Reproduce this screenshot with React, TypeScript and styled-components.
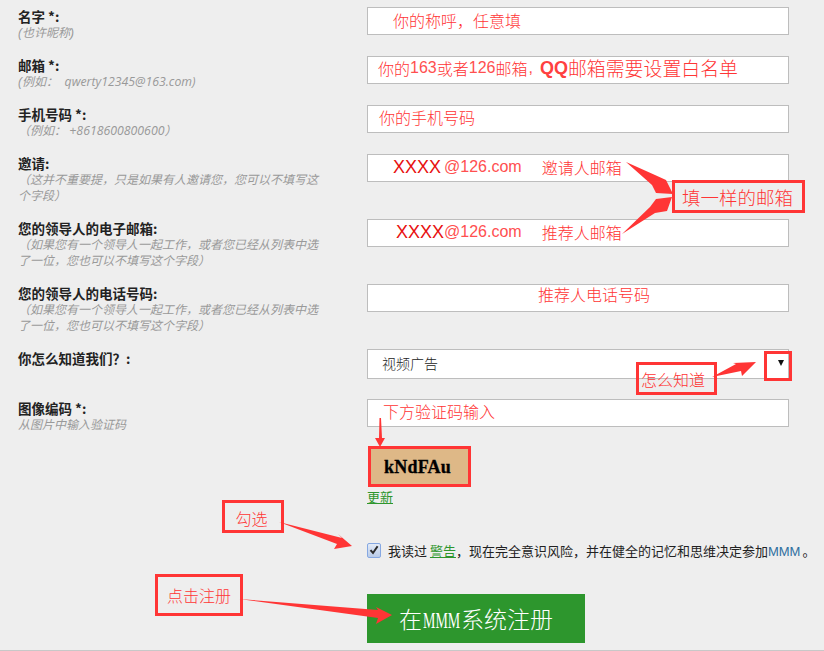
import React from "react";
import styled, { createGlobalStyle } from "styled-components";

const CJK = `"Noto Sans CJK SC", "Liberation Sans", sans-serif`;
const RED = "#ff3535";

const Global = createGlobalStyle`
  html, body { margin: 0; padding: 0; background: #eeeeee; }
  body { font-family: ${CJK}; overflow: hidden; }
`;

const Page = styled.div`
  position: relative;
  width: 824px;
  height: 651px;
  box-sizing: border-box;
  padding-top: 7px;
  background: #eeeeee;
  border-bottom: 1px solid #c8c8c8;
  overflow: hidden;
`;

const Row = styled.div<{ $h: number }>`
  display: flex;
  height: ${(p) => p.$h}px;
`;

const LabelCol = styled.div`
  box-sizing: border-box;
  width: 367px;
  padding-left: 18px;
`;

const Label = styled.div`
  font-size: 13.5px;
  line-height: 18px;
  font-weight: 700;
  color: #222222;
`;

const Hint = styled.div`
  width: 304px;
  font-family: "Liberation Sans", ${CJK};
  font-size: 12px;
  line-height: 16px;
  font-style: italic;
  color: #999999;
`;

const HintLatin = styled.span`
  font-family: "Open Sans", sans-serif;
  font-size: 12.3px;
`;

const FieldCol = styled.div`
  width: 422px;
`;

const Input = styled.div<{ $pad: number; $h?: number; $dark?: boolean; $lift?: number }>`
  box-sizing: border-box;
  display: flex;
  align-items: center;
  height: ${(p) => p.$h ?? 28}px;
  padding-left: ${(p) => p.$pad}px;
  padding-bottom: ${(p) => p.$lift ?? 4}px;
  background: #ffffff;
  border: 1px solid #bdbdbd;
  font-size: ${(p) => (p.$dark ? 14 : 16)}px;
  font-weight: 300;
  line-height: 1;
  white-space: nowrap;
  color: ${(p) => (p.$dark ? "#222222" : RED)};
`;

const Latin = styled.span`
  font-family: "Liberation Sans", sans-serif;
  color: #ff4f4f;
`;

const BoldLatin = styled.span`
  font-family: "Liberation Sans", sans-serif;
  font-size: 18px;
  font-weight: 700;
  margin-left: 7px;
  color: #ff4040;
`;

const LargeTail = styled.span`
  font-size: 18.9px;
`;

const Comma = styled(Latin)`
  margin-left: 1px;
`;

const Xs = styled(Latin)`
  font-size: 18px;
  color: #e81010;
`;

const DotGap = styled(Latin)`
  margin-left: 3px;
`;

const InviteRole = styled.span`
  margin-left: 20px;
`;

const SelectArrow = styled.span`
  position: absolute;
  left: 778px;
  top: 360px;
  width: 0;
  height: 0;
  border-left: 3.5px solid transparent;
  border-right: 3.5px solid transparent;
  border-top: 6px solid #111111;
`;

const CaptchaBlock = styled.div`
  margin-top: 20px;
  margin-left: 1px;
`;

const Captcha = styled.div`
  width: 102px;
  height: 40px;
  display: flex;
  align-items: center;
  justify-content: center;
  padding-right: 3px;
  box-sizing: border-box;
  background: #deb887;
  font-family: "Liberation Serif", serif;
  font-size: 18px;
  font-weight: 700;
  letter-spacing: 0.2px;
  -webkit-text-stroke: 0.3px #000000;
  color: #000000;
`;

const RefreshLink = styled.a`
  display: block;
  width: 26px;
  margin: 1px 0 0 -1px;
  font-size: 13px;
  line-height: 17px;
  color: #2d962d;
  text-decoration: underline;
`;

const AgreeRow = styled.div`
  display: flex;
  align-items: center;
  gap: 7px;
  margin: 35px 0 0 367px;
  height: 16px;
  font-size: 13px;
  white-space: nowrap;
  color: #222222;
`;

const CheckBox = styled.span`
  box-sizing: border-box;
  display: flex;
  align-items: center;
  justify-content: center;
  width: 14px;
  height: 15px;
  border: 1.5px solid #86a8e2;
  border-radius: 2px;
  background: linear-gradient(#e3ebf7, #b9cbe8);
`;

const GreenLink = styled.a`
  color: #2d962d;
  text-decoration: underline;
`;

const Mmm = styled.span`
  font-family: "Liberation Sans", sans-serif;
  color: #2f6f9f;
  margin-right: 2px;
`;

const Submit = styled.button`
  display: block;
  width: 218px;
  height: 49px;
  margin: 36px 0 0 367px;
  padding: 0 0 2px 32px;
  border: 0;
  background: #2d962d;
  color: #ffffff;
  font-family: ${CJK};
  font-size: 23px;
  font-weight: 300;
  text-align: left;
  white-space: nowrap;
`;

const SubmitLatin = styled.span`
  display: inline-block;
  width: 37px;
  margin: 0 1px;
  font-family: "Liberation Serif", serif;
  font-size: 24px;
  transform: scaleX(0.58);
  transform-origin: left center;
`;

const Callout = styled.div<{ $x: number; $y: number; $w: number; $h: number; $size?: number; $right?: number; $top?: number }>`
  position: absolute;
  box-sizing: border-box;
  left: ${(p) => p.$x}px;
  top: ${(p) => p.$y}px;
  width: ${(p) => p.$w}px;
  height: ${(p) => p.$h}px;
  padding-right: ${(p) => p.$right ?? 0}px;
  padding-top: ${(p) => p.$top ?? 0}px;
  border: 3px solid #ff3535;
  display: flex;
  align-items: center;
  justify-content: center;
  color: ${RED};
  font-size: ${(p) => p.$size ?? 16}px;
  font-weight: 300;
  white-space: nowrap;
`;

const Arrows = styled.svg`
  position: absolute;
  left: 0;
  top: 0;
  pointer-events: none;
`;

const arrowPolys = [
  "626,162 655,175 666,180 673,194 656,193 652,185",
  "622,234 650,207 656,199 672,197 667,211 655,213",
  "712,377 736,364 733,363 756,362 742,376 741,371",
  "379.5,418 381,418 382,438 385,438 380,447 375,438 379,438",
  "279,522 342,538 338,534 352,546 334,549 337,544",
  "239,599 378,610 376,607 392,615 376,624 378,618",
];

export default function App() {
  return (
    <Page>
      <Global />
      <Row $h={49}>
        <LabelCol>
          <Label>名字 *:</Label>
          <Hint>(也许昵称)</Hint>
        </LabelCol>
        <FieldCol>
          <Input $pad={25} $lift={2}>你的称呼，任意填</Input>
        </FieldCol>
      </Row>
      <Row $h={49}>
        <LabelCol>
          <Label>邮箱 *:</Label>
          <Hint>
            (例如： <HintLatin>&nbsp;qwerty12345@163.com)</HintLatin>
          </Hint>
        </LabelCol>
        <FieldCol>
          <Input $pad={10}>
            你的<Latin>163</Latin>或者<Latin>126</Latin>邮箱<Comma>,</Comma>
            <BoldLatin>QQ</BoldLatin>
            <LargeTail>邮箱需要设置白名单</LargeTail>
          </Input>
        </FieldCol>
      </Row>
      <Row $h={49}>
        <LabelCol>
          <Label>手机号码 *:</Label>
          <Hint>
            （例如： <HintLatin>+8618600800600</HintLatin>）
          </Hint>
        </LabelCol>
        <FieldCol>
          <Input $pad={11}>你的手机号码</Input>
        </FieldCol>
      </Row>

      <Row $h={65}>
        <LabelCol>
          <Label>邀请:</Label>
          <Hint>（这并不重要提，只是如果有人邀请您，您可以不填写这个字段）</Hint>
        </LabelCol>
        <FieldCol>
          <Input $pad={25} $lift={2}>
            <Xs>XXXX</Xs>
            <DotGap>@126.com</DotGap>
            <InviteRole>邀请人邮箱</InviteRole>
          </Input>
        </FieldCol>
      </Row>

      <Row $h={65}>
        <LabelCol>
          <Label>您的领导人的电子邮箱:</Label>
          <Hint>（如果您有一个领导人一起工作，或者您已经从列表中选了一位，您也可以不填写这个字段）</Hint>
        </LabelCol>
        <FieldCol>
          <Input $pad={28} $lift={2}>
            <Xs>XXXX</Xs>
            <Latin>@126.com</Latin>
            <InviteRole>推荐人邮箱</InviteRole>
          </Input>
        </FieldCol>
      </Row>

      <Row $h={65}>
        <LabelCol>
          <Label>您的领导人的电话号码:</Label>
          <Hint>（如果您有一个领导人一起工作，或者您已经从列表中选了一位，您也可以不填写这个字段）</Hint>
        </LabelCol>
        <FieldCol>
          <Input $pad={170} $lift={8}>
            推荐人电话号码
          </Input>
        </FieldCol>
      </Row>

      <Row $h={50}>
        <LabelCol>
          <Label>你怎么知道我们？:</Label>
        </LabelCol>
        <FieldCol>
          <Input $pad={14} $h={30} $dark $lift={2}>
            视频广告
          </Input>
        </FieldCol>
      </Row>

      <Row $h={108}>
        <LabelCol>
          <Label>图像编码 *:</Label>
          <Hint>从图片中输入验证码</Hint>
        </LabelCol>
        <FieldCol>
          <Input $pad={15}>下方验证码输入</Input>
          <CaptchaBlock>
            <Captcha>kNdFAu</Captcha>
            <RefreshLink>更新</RefreshLink>
          </CaptchaBlock>
        </FieldCol>
      </Row>

      <AgreeRow>
        <CheckBox>
          <svg width="10" height="10" viewBox="0 0 10 10">
            <path d="M1.5 5.2 L4 8 L8.6 1.2" fill="none" stroke="#2b2b2b" strokeWidth="2" />
          </svg>
        </CheckBox>
        <span>
          我读过 <GreenLink>警告</GreenLink>，现在完全意识风险，并在健全的记忆和思维决定参加<Mmm>MMM</Mmm>。
        </span>
      </AgreeRow>

      <Submit>
        在<SubmitLatin>MMM</SubmitLatin>系统注册
      </Submit>

      <SelectArrow />
      <Callout $x={672} $y={180} $w={133} $h={33} $size={18.5} $right={2}>填一样的邮箱</Callout>
      <Callout $x={636} $y={362} $w={81} $h={33} $right={7}>怎么知道</Callout>
      <Callout $x={764} $y={351} $w={28} $h={30} />
      <Callout $x={368} $y={446} $w={103} $h={41} />
      <Callout $x={222} $y={500} $w={62} $h={33} $top={3} $right={3}>勾选</Callout>
      <Callout $x={155} $y={574} $w={88} $h={42}>点击注册</Callout>
      <Arrows width="824" height="651" viewBox="0 0 824 651">
        {arrowPolys.map((p) => (
          <polygon key={p} points={p} fill="#ff3535" />
        ))}
      </Arrows>
    </Page>
  );
}
